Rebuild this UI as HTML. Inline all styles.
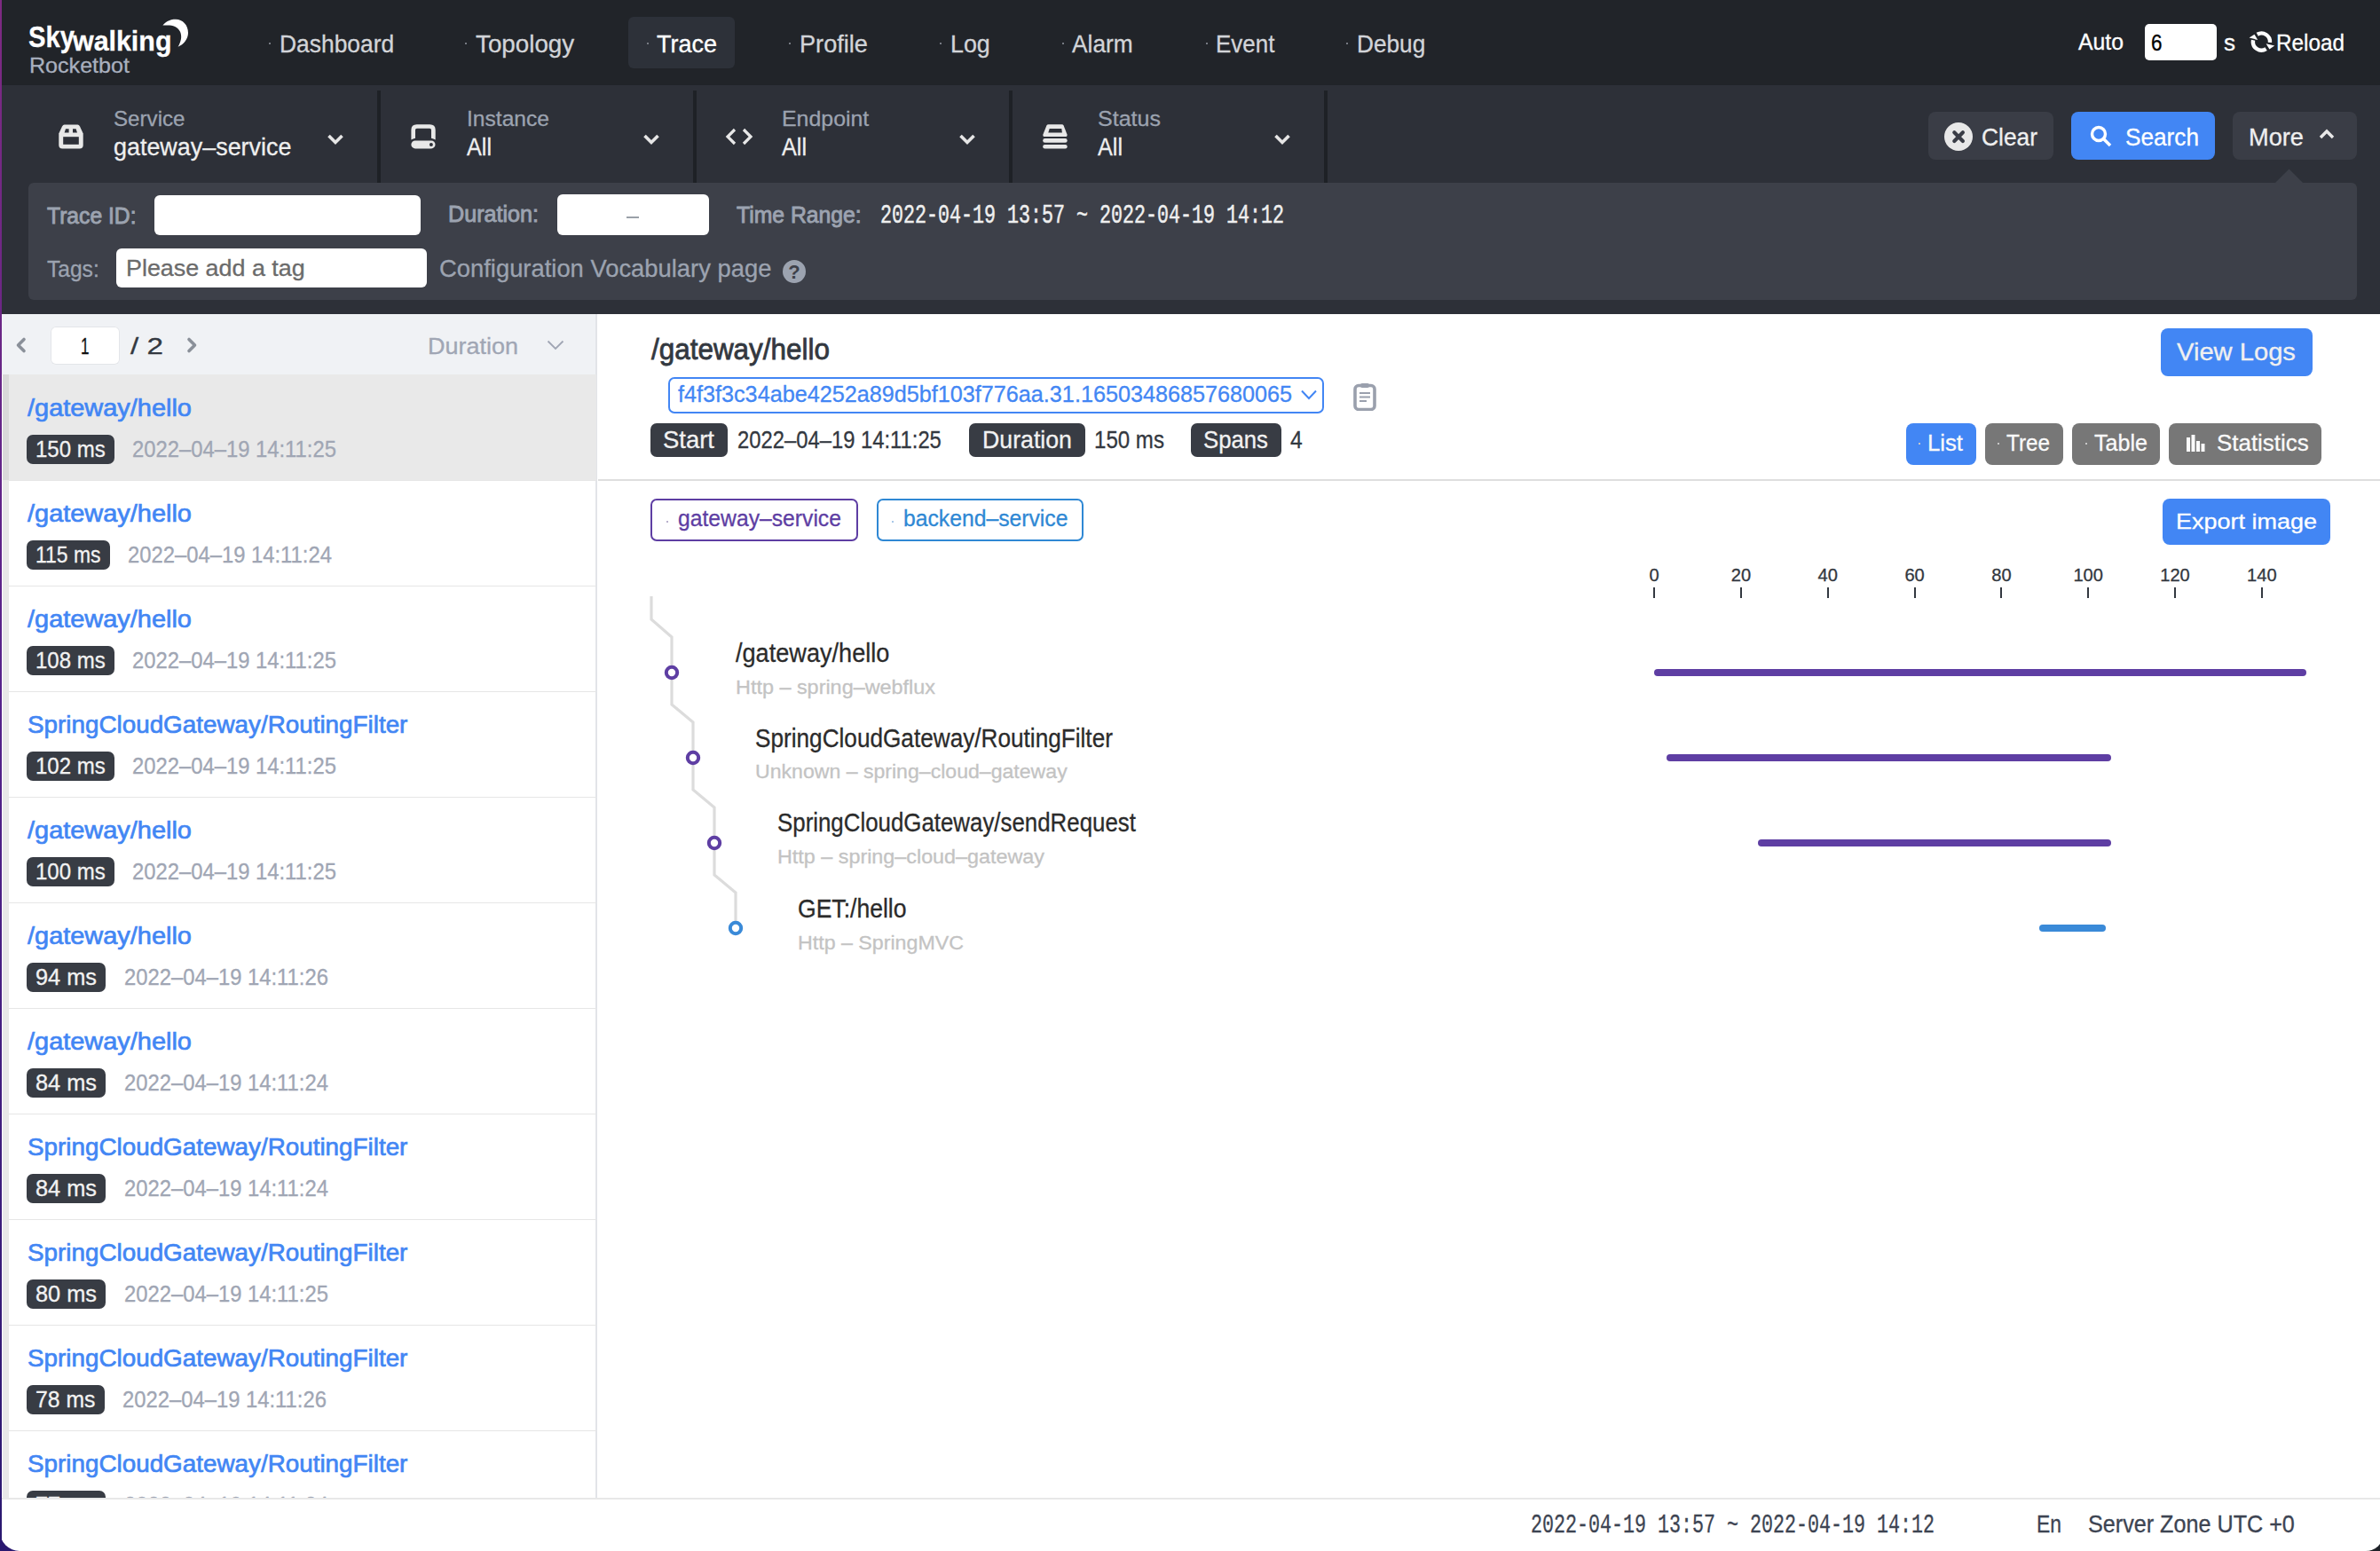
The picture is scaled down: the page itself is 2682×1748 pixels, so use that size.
<!DOCTYPE html>
<html><head><meta charset="utf-8"><style>
html,body{margin:0;padding:0}
body{width:2682px;height:1748px;overflow:hidden;position:relative;background:#1f2228;font-family:'Liberation Sans',sans-serif}
.r{position:absolute}
.t{position:absolute;white-space:nowrap;line-height:normal;transform-origin:0 0}
#win{position:absolute;left:0;top:0;width:2686px;height:1748px;overflow:hidden;border-radius:0 0 20px 22px}
</style></head><body>
<div class="r" style="left:0;top:1700px;width:40px;height:48px;background:#2a1870"></div>
<div id="win">
<div class="r" style="left:0.00px;top:0.00px;width:2682.00px;height:96.00px;background:#212429;"></div>
<div class="t" style="left:32.00px;top:22.31px;font-size:34.08px;color:#fff;font-family:'Liberation Sans',sans-serif;font-weight:700;transform:scaleX(0.8576);-webkit-text-stroke:0.3px #fff;">Sky</div>
<div class="t" style="left:82.00px;top:29.06px;font-size:31.42px;color:#fff;font-family:'Liberation Sans',sans-serif;font-weight:700;transform:scaleX(0.9675);-webkit-text-stroke:0.3px #fff;">walking</div>
<svg class="r" style="left:180px;top:20px" width="36" height="36" viewBox="0 0 36 36"><path d="M3.4 8.4 C8 3 14 1.5 18 1.7 C26 2 32 8 32 17 C32 24 27 30 20.6 32.8 C24 27 25 22 23.5 17 C22 12 17 9 11 8.5 C8 8.3 5 8.5 3.4 8.4 Z" fill="#fff"/></svg>
<div class="t" style="left:33.00px;top:60.39px;font-size:24.44px;color:#a9b0bf;font-family:'Liberation Sans',sans-serif;font-weight:400;transform:scaleX(1.0268);-webkit-text-stroke:0.3px #a9b0bf;">Rocketbot</div>
<div class="r" style="left:708.00px;top:18.75px;width:120.00px;height:58.00px;background:#2d3139;border-radius:6px;"></div>
<div class="t" style="left:314.50px;top:34.04px;font-size:27.37px;color:#d2d4d8;font-family:'Liberation Sans',sans-serif;font-weight:400;transform:scaleX(0.9651);-webkit-text-stroke:0.3px #d2d4d8;">Dashboard</div>
<div class="r" style="left:303.00px;top:48.00px;width:2.00px;height:2.00px;background:#777b83;"></div>
<div class="t" style="left:536.25px;top:34.04px;font-size:27.37px;color:#d2d4d8;font-family:'Liberation Sans',sans-serif;font-weight:400;transform:scaleX(1.0153);-webkit-text-stroke:0.3px #d2d4d8;">Topology</div>
<div class="r" style="left:524.00px;top:48.00px;width:2.00px;height:2.00px;background:#777b83;"></div>
<div class="t" style="left:740.00px;top:34.04px;font-size:27.37px;color:#ffffff;font-family:'Liberation Sans',sans-serif;font-weight:400;transform:scaleX(0.9861);-webkit-text-stroke:0.3px #ffffff;">Trace</div>
<div class="r" style="left:728.75px;top:48.00px;width:2.00px;height:2.00px;background:#777b83;"></div>
<div class="t" style="left:900.90px;top:34.04px;font-size:27.37px;color:#d2d4d8;font-family:'Liberation Sans',sans-serif;font-weight:400;transform:scaleX(0.9924);-webkit-text-stroke:0.3px #d2d4d8;">Profile</div>
<div class="r" style="left:889.00px;top:48.00px;width:2.00px;height:2.00px;background:#777b83;"></div>
<div class="t" style="left:1070.80px;top:34.04px;font-size:27.37px;color:#d2d4d8;font-family:'Liberation Sans',sans-serif;font-weight:400;transform:scaleX(0.9809);-webkit-text-stroke:0.3px #d2d4d8;">Log</div>
<div class="r" style="left:1059.00px;top:48.00px;width:2.00px;height:2.00px;background:#777b83;"></div>
<div class="t" style="left:1207.90px;top:34.04px;font-size:27.37px;color:#d2d4d8;font-family:'Liberation Sans',sans-serif;font-weight:400;transform:scaleX(0.9611);-webkit-text-stroke:0.3px #d2d4d8;">Alarm</div>
<div class="r" style="left:1197.00px;top:48.00px;width:2.00px;height:2.00px;background:#777b83;"></div>
<div class="t" style="left:1369.60px;top:34.04px;font-size:27.37px;color:#d2d4d8;font-family:'Liberation Sans',sans-serif;font-weight:400;transform:scaleX(0.9486);-webkit-text-stroke:0.3px #d2d4d8;">Event</div>
<div class="r" style="left:1359.00px;top:48.00px;width:2.00px;height:2.00px;background:#777b83;"></div>
<div class="t" style="left:1528.90px;top:34.04px;font-size:27.37px;color:#d2d4d8;font-family:'Liberation Sans',sans-serif;font-weight:400;transform:scaleX(0.9583);-webkit-text-stroke:0.3px #d2d4d8;">Debug</div>
<div class="r" style="left:1517.00px;top:48.00px;width:2.00px;height:2.00px;background:#777b83;"></div>
<div class="t" style="left:2342.00px;top:33.20px;font-size:25.84px;color:#fff;font-family:'Liberation Sans',sans-serif;font-weight:400;transform:scaleX(0.9595);-webkit-text-stroke:0.3px #fff;">Auto</div>
<div class="r" style="left:2417.00px;top:27.00px;width:80.50px;height:40.50px;background:#fff;border-radius:5px;"></div>
<div class="t" style="left:2424.00px;top:33.38px;font-size:26.19px;color:#000;font-family:'Liberation Sans',sans-serif;font-weight:400;transform:scaleX(0.8583);-webkit-text-stroke:0.3px #000;">6</div>
<div class="t" style="left:2506.00px;top:33.05px;font-size:26.00px;color:#fff;font-family:'Liberation Sans',sans-serif;font-weight:400;transform:scaleX(1.0000);-webkit-text-stroke:0.3px #fff;">s</div>
<svg class="r" style="left:2530px;top:30px" width="36" height="34" viewBox="0 0 36 34"><path d="M13.75 8.77 A9.5 9.5 0 0 1 27.96 17.83" stroke="#fff" stroke-width="4.4" fill="none"/><path d="M23.6 19.2 L33.2 21.6 L27.4 25.6Z" fill="#fff"/><path d="M9.1 15.3 A9.5 9.5 0 0 0 23.6 25.1" stroke="#fff" stroke-width="4.4" fill="none"/><path d="M4.6 12.6 L10.5 8.8 L14.2 14.9Z" fill="#fff"/></svg>
<div class="t" style="left:2565.00px;top:32.88px;font-size:26.19px;color:#fff;font-family:'Liberation Sans',sans-serif;font-weight:400;transform:scaleX(0.9279);-webkit-text-stroke:0.3px #fff;">Reload</div>
<div class="r" style="left:0.00px;top:96.00px;width:2682.00px;height:258.00px;background:#2d3038;"></div>
<div class="r" style="left:425.00px;top:102.00px;width:4.00px;height:103.50px;background:#1e2126;"></div>
<div class="r" style="left:781.00px;top:102.00px;width:4.00px;height:103.50px;background:#1e2126;"></div>
<div class="r" style="left:1137.00px;top:102.00px;width:4.00px;height:103.50px;background:#1e2126;"></div>
<div class="r" style="left:1492.00px;top:102.00px;width:4.00px;height:103.50px;background:#1e2126;"></div>
<div class="t" style="left:128.25px;top:120.49px;font-size:24.44px;color:#9ca3b0;font-family:'Liberation Sans',sans-serif;font-weight:400;transform:scaleX(0.9877);-webkit-text-stroke:0.3px #9ca3b0;">Service</div>
<div class="t" style="left:128.25px;top:149.77px;font-size:27.93px;color:#efefef;font-family:'Liberation Sans',sans-serif;font-weight:400;transform:scaleX(0.9637);-webkit-text-stroke:0.3px #efefef;">gateway–service</div>
<svg class="r" style="left:368.0px;top:150px" width="20" height="16" viewBox="0 0 20 16"><path d="M2.5 3 L10 10.5 L17.5 3" stroke="#e6e6e6" stroke-width="3.6" fill="none"/></svg>
<div class="t" style="left:525.75px;top:120.49px;font-size:24.44px;color:#9ca3b0;font-family:'Liberation Sans',sans-serif;font-weight:400;transform:scaleX(1.0065);-webkit-text-stroke:0.3px #9ca3b0;">Instance</div>
<div class="t" style="left:525.75px;top:149.77px;font-size:27.93px;color:#efefef;font-family:'Liberation Sans',sans-serif;font-weight:400;transform:scaleX(0.9020);-webkit-text-stroke:0.3px #efefef;">All</div>
<svg class="r" style="left:724.0px;top:150px" width="20" height="16" viewBox="0 0 20 16"><path d="M2.5 3 L10 10.5 L17.5 3" stroke="#e6e6e6" stroke-width="3.6" fill="none"/></svg>
<div class="t" style="left:881.40px;top:120.49px;font-size:24.44px;color:#9ca3b0;font-family:'Liberation Sans',sans-serif;font-weight:400;transform:scaleX(1.0188);-webkit-text-stroke:0.3px #9ca3b0;">Endpoint</div>
<div class="t" style="left:881.40px;top:149.77px;font-size:27.93px;color:#efefef;font-family:'Liberation Sans',sans-serif;font-weight:400;transform:scaleX(0.9020);-webkit-text-stroke:0.3px #efefef;">All</div>
<svg class="r" style="left:1079.5px;top:150px" width="20" height="16" viewBox="0 0 20 16"><path d="M2.5 3 L10 10.5 L17.5 3" stroke="#e6e6e6" stroke-width="3.6" fill="none"/></svg>
<div class="t" style="left:1236.80px;top:120.49px;font-size:24.44px;color:#9ca3b0;font-family:'Liberation Sans',sans-serif;font-weight:400;transform:scaleX(1.0247);-webkit-text-stroke:0.3px #9ca3b0;">Status</div>
<div class="t" style="left:1236.80px;top:149.77px;font-size:27.93px;color:#efefef;font-family:'Liberation Sans',sans-serif;font-weight:400;transform:scaleX(0.9020);-webkit-text-stroke:0.3px #efefef;">All</div>
<svg class="r" style="left:1435.0px;top:150px" width="20" height="16" viewBox="0 0 20 16"><path d="M2.5 3 L10 10.5 L17.5 3" stroke="#e6e6e6" stroke-width="3.6" fill="none"/></svg>
<svg class="r" style="left:66px;top:140px" width="28" height="28" viewBox="0 0 28 28"><path d="M6.5 0.5 H21.5 Q23 0.5 24 2.5 L27.7 10.5 V23.5 Q27.7 27.5 23.7 27.5 H4.3 Q0.3 27.5 0.3 23.5 V10.5 L4 2.5 Q5 0.5 6.5 0.5Z" fill="#e8e8e8"/><rect x="5.2" y="14.2" width="17.6" height="8.6" fill="#2d3038"/><path d="M8 5.2 H11.6 V9.4 H6.6Z M16 5.2 H19.6 L21 9.4 H16Z" fill="#2d3038"/></svg>
<svg class="r" style="left:463px;top:140px" width="28" height="28" viewBox="0 0 28 28"><path d="M0.4 17.6 V6.5 Q0.4 0.2 6.7 0.2 H21.4 Q27.7 0.2 27.7 6.5 V17.6 Q25.5 16.3 23 15.8 V6.5 Q23 4.8 21.3 4.8 H6.8 Q5 4.8 5 6.5 V15.8 Q2.5 16.3 0.4 17.6Z" fill="#e8e8e8"/><rect x="0.4" y="18.4" width="27.1" height="9" rx="4.5" fill="#e8e8e8"/><circle cx="22.9" cy="22.9" r="2" fill="#2d3038"/></svg>
<svg class="r" style="left:817px;top:144px" width="32" height="20" viewBox="0 0 32 20"><path d="M11 2 L3 10 L11 18 M21 2 L29 10 L21 18" stroke="#e8e8e8" stroke-width="3.2" fill="none"/></svg>
<svg class="r" style="left:1174px;top:140px" width="30" height="30" viewBox="0 0 30 30"><path d="M7.5 0.2 H22.7 Q24 0.2 24.6 1.6 L28.5 11.5 Q29 14.1 26.5 14.1 H3.4 Q0.9 14.1 1.4 11.5 L5.4 1.6 Q6 0.2 7.5 0.2Z" fill="#e8e8e8"/><path d="M8.7 5.1 H22.3 L22.9 9.4 H7.3Z" fill="#2d3038"/><rect x="1.2" y="16.1" width="27.5" height="4.7" rx="2.3" fill="#e8e8e8"/><rect x="1.2" y="22.9" width="27.5" height="4.5" rx="2.2" fill="#e8e8e8"/></svg>
<div class="r" style="left:2173.00px;top:126.00px;width:141.00px;height:54.00px;background:#3a3d46;border-radius:8px;"></div>
<svg class="r" style="left:2191px;top:138px" width="32" height="32" viewBox="0 0 32 32"><circle cx="16" cy="16" r="16" fill="#e8e8e8"/><path d="M11.3 11.3 L20.9 20.9 M20.9 11.3 L11.3 20.9" stroke="#3a3d46" stroke-width="4.2" stroke-linecap="round"/></svg>
<div class="t" style="left:2233.00px;top:139.74px;font-size:26.89px;color:#efefef;font-family:'Liberation Sans',sans-serif;font-weight:400;transform:scaleX(0.9806);-webkit-text-stroke:0.3px #efefef;">Clear</div>
<div class="r" style="left:2334.00px;top:126.00px;width:162.00px;height:54.00px;background:#4286f4;border-radius:8px;"></div>
<svg class="r" style="left:2354px;top:140px" width="28" height="28" viewBox="0 0 28 28"><circle cx="11" cy="11" r="7.5" stroke="#fff" stroke-width="3.4" fill="none"/><path d="M16.5 16.5 L24 24" stroke="#fff" stroke-width="3.6"/></svg>
<div class="t" style="left:2395.00px;top:140.24px;font-size:26.89px;color:#fff;font-family:'Liberation Sans',sans-serif;font-weight:400;transform:scaleX(0.9743);-webkit-text-stroke:0.3px #fff;">Search</div>
<div class="r" style="left:2516.00px;top:126.00px;width:140.00px;height:54.00px;background:#3a3d46;border-radius:8px;"></div>
<div class="t" style="left:2534.00px;top:140.24px;font-size:26.89px;color:#efefef;font-family:'Liberation Sans',sans-serif;font-weight:400;transform:scaleX(1.0122);-webkit-text-stroke:0.3px #efefef;">More</div>
<svg class="r" style="left:2612px;top:144px" width="20" height="14" viewBox="0 0 20 14"><path d="M3 11 L10 4 L17 11" stroke="#e8e8e8" stroke-width="3.4" fill="none"/></svg>
<div class="r" style="left:32.00px;top:206.00px;width:2624.00px;height:132.00px;background:#3d4049;border-radius:6px;"></div>
<svg class="r" style="left:2563px;top:190px" width="33" height="17" viewBox="0 0 33 17"><path d="M0 17 L16.5 0.5 L33 17Z" fill="#3d4049"/></svg>
<div class="t" style="left:52.50px;top:228.52px;font-size:25.49px;color:#9ca3b0;font-family:'Liberation Sans',sans-serif;font-weight:400;transform:scaleX(0.9677);-webkit-text-stroke:0.9px #9ca3b0;">Trace ID:</div>
<div class="r" style="left:174.25px;top:220.00px;width:299.50px;height:44.50px;background:#fff;border-radius:6px;"></div>
<div class="t" style="left:504.70px;top:227.02px;font-size:25.49px;color:#9ca3b0;font-family:'Liberation Sans',sans-serif;font-weight:400;transform:scaleX(0.9862);-webkit-text-stroke:0.9px #9ca3b0;">Duration:</div>
<div class="r" style="left:627.80px;top:219.00px;width:171.00px;height:46.00px;background:#fff;border-radius:6px;"></div>
<div class="r" style="left:706.00px;top:244.00px;width:14.00px;height:2.00px;background:#9aa0a8;"></div>
<div class="t" style="left:830.30px;top:227.52px;font-size:25.49px;color:#9ca3b0;font-family:'Liberation Sans',sans-serif;font-weight:400;transform:scaleX(0.9706);-webkit-text-stroke:0.9px #9ca3b0;">Time Range:</div>
<div class="t" style="left:992.00px;top:227.24px;font-size:28.91px;color:#efefef;font-family:'Liberation Mono',monospace;font-weight:400;transform:scaleX(0.7495);-webkit-text-stroke:0.5px #efefef;">2022-04-19 13:57 ~ 2022-04-19 14:12</div>
<div class="t" style="left:52.50px;top:288.52px;font-size:25.49px;color:#9ca3b0;font-family:'Liberation Sans',sans-serif;font-weight:400;transform:scaleX(0.9643);-webkit-text-stroke:0.3px #9ca3b0;">Tags:</div>
<div class="r" style="left:131.25px;top:280.00px;width:349.50px;height:44.25px;background:#fff;border-radius:6px;"></div>
<div class="t" style="left:142.00px;top:288.20px;font-size:25.84px;color:#6b6b6b;font-family:'Liberation Sans',sans-serif;font-weight:400;transform:scaleX(1.0403);-webkit-text-stroke:0.3px #6b6b6b;">Please add a tag</div>
<div class="t" style="left:495.00px;top:287.77px;font-size:26.96px;color:#9ca3b0;font-family:'Liberation Sans',sans-serif;font-weight:400;transform:scaleX(1.0156);-webkit-text-stroke:0.3px #9ca3b0;">Configuration Vocabulary page</div>
<svg class="r" style="left:882px;top:292.5px" width="26" height="26" viewBox="0 0 26 26"><circle cx="13" cy="13" r="13" fill="#9ca3b0"/><text x="13" y="21" text-anchor="middle" font-family="Liberation Sans" font-weight="700" font-size="22" fill="#3d4049">?</text></svg>
<div class="r" style="left:2.00px;top:354.00px;width:2680.00px;height:1394.00px;background:#fff;"></div>
<div class="r" style="left:2.00px;top:354.00px;width:670.00px;height:68.00px;background:#f0f2f5;"></div>
<div class="r" style="left:671.00px;top:354.00px;width:2.00px;height:1334.00px;background:#e2e4e8;"></div>
<svg class="r" style="left:15px;top:378px" width="18" height="22" viewBox="0 0 18 22"><path d="M12 4.5 L5.5 11 L12 17.5" stroke="#8a9099" stroke-width="3.6" stroke-linecap="round" stroke-linejoin="round" fill="none"/></svg>
<div class="r" style="left:57.00px;top:368.00px;width:78.00px;height:42.60px;background:#fff;border-radius:6px;box-shadow:0 0 0 1px #e3e5e9 inset;"></div>
<div class="t" style="left:90.50px;top:374.56px;font-size:26.54px;color:#111;font-family:'Liberation Sans',sans-serif;font-weight:400;transform:scaleX(0.6437);-webkit-text-stroke:0.3px #111;">1</div>
<div class="t" style="left:147.00px;top:374.56px;font-size:26.54px;color:#333840;font-family:'Liberation Sans',sans-serif;font-weight:400;transform:scaleX(1.2541);-webkit-text-stroke:0.3px #333840;">/ 2</div>
<svg class="r" style="left:207px;top:378px" width="18" height="22" viewBox="0 0 18 22"><path d="M6 4.5 L12.5 11 L6 17.5" stroke="#8a9099" stroke-width="3.6" stroke-linecap="round" stroke-linejoin="round" fill="none"/></svg>
<div class="t" style="left:482.00px;top:374.56px;font-size:26.54px;color:#a0a6b4;font-family:'Liberation Sans',sans-serif;font-weight:400;transform:scaleX(1.0169);-webkit-text-stroke:0.3px #a0a6b4;">Duration</div>
<svg class="r" style="left:615px;top:382px" width="22" height="14" viewBox="0 0 22 14"><path d="M2.5 2.5 L11 11 L19.5 2.5" stroke="#a0a6b4" stroke-width="1.8" fill="none"/></svg>
<div class="r" style="left:0;top:422px;width:672px;height:1266px;overflow:hidden">
<div class="r" style="left:3.00px;top:0.00px;width:7.00px;height:119.50px;background:#d9d9d9;"></div>
<div class="r" style="left:10.00px;top:0.00px;width:662.00px;height:119.50px;background:#e9e9e9;"></div>
<div class="r" style="left:10.00px;top:118.50px;width:662.00px;height:1.50px;background:#e6e6e6;"></div>
<div class="t" style="left:31.00px;top:21.16px;font-size:28.49px;color:#4286f4;font-family:'Liberation Sans',sans-serif;font-weight:400;transform:scaleX(1.0156);-webkit-text-stroke:0.7px #4286f4;">/gateway/hello</div>
<div class="r" style="left:30.00px;top:68.00px;width:98.80px;height:33.00px;background:#383c44;border-radius:7px;"></div>
<div class="t" style="left:39.70px;top:70.19px;font-size:25.42px;color:#f2f2f2;font-family:'Liberation Sans',sans-serif;font-weight:400;transform:scaleX(0.9453);-webkit-text-stroke:0.3px #f2f2f2;">150 ms</div>
<div class="t" style="left:149.30px;top:70.19px;font-size:25.42px;color:#a0a6b4;font-family:'Liberation Sans',sans-serif;font-weight:400;transform:scaleX(0.9369);-webkit-text-stroke:0.3px #a0a6b4;">2022–04–19 14:11:25</div>
<div class="r" style="left:3.00px;top:119.00px;width:7.00px;height:119.50px;background:#e8e8e8;"></div>
<div class="r" style="left:10.00px;top:237.50px;width:662.00px;height:1.50px;background:#e6e6e6;"></div>
<div class="t" style="left:31.00px;top:140.16px;font-size:28.49px;color:#4286f4;font-family:'Liberation Sans',sans-serif;font-weight:400;transform:scaleX(1.0156);-webkit-text-stroke:0.7px #4286f4;">/gateway/hello</div>
<div class="r" style="left:30.00px;top:187.00px;width:93.50px;height:33.00px;background:#383c44;border-radius:7px;"></div>
<div class="t" style="left:39.70px;top:189.19px;font-size:25.42px;color:#f2f2f2;font-family:'Liberation Sans',sans-serif;font-weight:400;transform:scaleX(0.9022);-webkit-text-stroke:0.3px #f2f2f2;">115 ms</div>
<div class="t" style="left:144.00px;top:189.19px;font-size:25.42px;color:#a0a6b4;font-family:'Liberation Sans',sans-serif;font-weight:400;transform:scaleX(0.9369);-webkit-text-stroke:0.3px #a0a6b4;">2022–04–19 14:11:24</div>
<div class="r" style="left:3.00px;top:238.00px;width:7.00px;height:119.50px;background:#e8e8e8;"></div>
<div class="r" style="left:10.00px;top:356.50px;width:662.00px;height:1.50px;background:#e6e6e6;"></div>
<div class="t" style="left:31.00px;top:259.16px;font-size:28.49px;color:#4286f4;font-family:'Liberation Sans',sans-serif;font-weight:400;transform:scaleX(1.0156);-webkit-text-stroke:0.7px #4286f4;">/gateway/hello</div>
<div class="r" style="left:30.00px;top:306.00px;width:98.80px;height:33.00px;background:#383c44;border-radius:7px;"></div>
<div class="t" style="left:39.70px;top:308.19px;font-size:25.42px;color:#f2f2f2;font-family:'Liberation Sans',sans-serif;font-weight:400;transform:scaleX(0.9453);-webkit-text-stroke:0.3px #f2f2f2;">108 ms</div>
<div class="t" style="left:149.30px;top:308.19px;font-size:25.42px;color:#a0a6b4;font-family:'Liberation Sans',sans-serif;font-weight:400;transform:scaleX(0.9369);-webkit-text-stroke:0.3px #a0a6b4;">2022–04–19 14:11:25</div>
<div class="r" style="left:3.00px;top:357.00px;width:7.00px;height:119.50px;background:#e8e8e8;"></div>
<div class="r" style="left:10.00px;top:475.50px;width:662.00px;height:1.50px;background:#e6e6e6;"></div>
<div class="t" style="left:31.00px;top:378.16px;font-size:28.49px;color:#4286f4;font-family:'Liberation Sans',sans-serif;font-weight:400;transform:scaleX(0.9768);-webkit-text-stroke:0.7px #4286f4;">SpringCloudGateway/RoutingFilter</div>
<div class="r" style="left:30.00px;top:425.00px;width:98.80px;height:33.00px;background:#383c44;border-radius:7px;"></div>
<div class="t" style="left:39.70px;top:427.19px;font-size:25.42px;color:#f2f2f2;font-family:'Liberation Sans',sans-serif;font-weight:400;transform:scaleX(0.9453);-webkit-text-stroke:0.3px #f2f2f2;">102 ms</div>
<div class="t" style="left:149.30px;top:427.19px;font-size:25.42px;color:#a0a6b4;font-family:'Liberation Sans',sans-serif;font-weight:400;transform:scaleX(0.9369);-webkit-text-stroke:0.3px #a0a6b4;">2022–04–19 14:11:25</div>
<div class="r" style="left:3.00px;top:476.00px;width:7.00px;height:119.50px;background:#e8e8e8;"></div>
<div class="r" style="left:10.00px;top:594.50px;width:662.00px;height:1.50px;background:#e6e6e6;"></div>
<div class="t" style="left:31.00px;top:497.16px;font-size:28.49px;color:#4286f4;font-family:'Liberation Sans',sans-serif;font-weight:400;transform:scaleX(1.0156);-webkit-text-stroke:0.7px #4286f4;">/gateway/hello</div>
<div class="r" style="left:30.00px;top:544.00px;width:98.80px;height:33.00px;background:#383c44;border-radius:7px;"></div>
<div class="t" style="left:39.70px;top:546.19px;font-size:25.42px;color:#f2f2f2;font-family:'Liberation Sans',sans-serif;font-weight:400;transform:scaleX(0.9453);-webkit-text-stroke:0.3px #f2f2f2;">100 ms</div>
<div class="t" style="left:149.30px;top:546.19px;font-size:25.42px;color:#a0a6b4;font-family:'Liberation Sans',sans-serif;font-weight:400;transform:scaleX(0.9369);-webkit-text-stroke:0.3px #a0a6b4;">2022–04–19 14:11:25</div>
<div class="r" style="left:3.00px;top:595.00px;width:7.00px;height:119.50px;background:#e8e8e8;"></div>
<div class="r" style="left:10.00px;top:713.50px;width:662.00px;height:1.50px;background:#e6e6e6;"></div>
<div class="t" style="left:31.00px;top:616.16px;font-size:28.49px;color:#4286f4;font-family:'Liberation Sans',sans-serif;font-weight:400;transform:scaleX(1.0156);-webkit-text-stroke:0.7px #4286f4;">/gateway/hello</div>
<div class="r" style="left:30.00px;top:663.00px;width:89.00px;height:33.00px;background:#383c44;border-radius:7px;"></div>
<div class="t" style="left:39.70px;top:665.19px;font-size:25.42px;color:#f2f2f2;font-family:'Liberation Sans',sans-serif;font-weight:400;transform:scaleX(0.9968);-webkit-text-stroke:0.3px #f2f2f2;">94 ms</div>
<div class="t" style="left:139.50px;top:665.19px;font-size:25.42px;color:#a0a6b4;font-family:'Liberation Sans',sans-serif;font-weight:400;transform:scaleX(0.9369);-webkit-text-stroke:0.3px #a0a6b4;">2022–04–19 14:11:26</div>
<div class="r" style="left:3.00px;top:714.00px;width:7.00px;height:119.50px;background:#e8e8e8;"></div>
<div class="r" style="left:10.00px;top:832.50px;width:662.00px;height:1.50px;background:#e6e6e6;"></div>
<div class="t" style="left:31.00px;top:735.16px;font-size:28.49px;color:#4286f4;font-family:'Liberation Sans',sans-serif;font-weight:400;transform:scaleX(1.0156);-webkit-text-stroke:0.7px #4286f4;">/gateway/hello</div>
<div class="r" style="left:30.00px;top:782.00px;width:89.00px;height:33.00px;background:#383c44;border-radius:7px;"></div>
<div class="t" style="left:39.70px;top:784.19px;font-size:25.42px;color:#f2f2f2;font-family:'Liberation Sans',sans-serif;font-weight:400;transform:scaleX(0.9968);-webkit-text-stroke:0.3px #f2f2f2;">84 ms</div>
<div class="t" style="left:139.50px;top:784.19px;font-size:25.42px;color:#a0a6b4;font-family:'Liberation Sans',sans-serif;font-weight:400;transform:scaleX(0.9369);-webkit-text-stroke:0.3px #a0a6b4;">2022–04–19 14:11:24</div>
<div class="r" style="left:3.00px;top:833.00px;width:7.00px;height:119.50px;background:#e8e8e8;"></div>
<div class="r" style="left:10.00px;top:951.50px;width:662.00px;height:1.50px;background:#e6e6e6;"></div>
<div class="t" style="left:31.00px;top:854.16px;font-size:28.49px;color:#4286f4;font-family:'Liberation Sans',sans-serif;font-weight:400;transform:scaleX(0.9768);-webkit-text-stroke:0.7px #4286f4;">SpringCloudGateway/RoutingFilter</div>
<div class="r" style="left:30.00px;top:901.00px;width:89.00px;height:33.00px;background:#383c44;border-radius:7px;"></div>
<div class="t" style="left:39.70px;top:903.19px;font-size:25.42px;color:#f2f2f2;font-family:'Liberation Sans',sans-serif;font-weight:400;transform:scaleX(0.9968);-webkit-text-stroke:0.3px #f2f2f2;">84 ms</div>
<div class="t" style="left:139.50px;top:903.19px;font-size:25.42px;color:#a0a6b4;font-family:'Liberation Sans',sans-serif;font-weight:400;transform:scaleX(0.9369);-webkit-text-stroke:0.3px #a0a6b4;">2022–04–19 14:11:24</div>
<div class="r" style="left:3.00px;top:952.00px;width:7.00px;height:119.50px;background:#e8e8e8;"></div>
<div class="r" style="left:10.00px;top:1070.50px;width:662.00px;height:1.50px;background:#e6e6e6;"></div>
<div class="t" style="left:31.00px;top:973.16px;font-size:28.49px;color:#4286f4;font-family:'Liberation Sans',sans-serif;font-weight:400;transform:scaleX(0.9768);-webkit-text-stroke:0.7px #4286f4;">SpringCloudGateway/RoutingFilter</div>
<div class="r" style="left:30.00px;top:1020.00px;width:89.00px;height:33.00px;background:#383c44;border-radius:7px;"></div>
<div class="t" style="left:39.70px;top:1022.19px;font-size:25.42px;color:#f2f2f2;font-family:'Liberation Sans',sans-serif;font-weight:400;transform:scaleX(0.9968);-webkit-text-stroke:0.3px #f2f2f2;">80 ms</div>
<div class="t" style="left:139.50px;top:1022.19px;font-size:25.42px;color:#a0a6b4;font-family:'Liberation Sans',sans-serif;font-weight:400;transform:scaleX(0.9369);-webkit-text-stroke:0.3px #a0a6b4;">2022–04–19 14:11:25</div>
<div class="r" style="left:3.00px;top:1071.00px;width:7.00px;height:119.50px;background:#e8e8e8;"></div>
<div class="r" style="left:10.00px;top:1189.50px;width:662.00px;height:1.50px;background:#e6e6e6;"></div>
<div class="t" style="left:31.00px;top:1092.16px;font-size:28.49px;color:#4286f4;font-family:'Liberation Sans',sans-serif;font-weight:400;transform:scaleX(0.9768);-webkit-text-stroke:0.7px #4286f4;">SpringCloudGateway/RoutingFilter</div>
<div class="r" style="left:30.00px;top:1139.00px;width:87.60px;height:33.00px;background:#383c44;border-radius:7px;"></div>
<div class="t" style="left:39.70px;top:1141.19px;font-size:25.42px;color:#f2f2f2;font-family:'Liberation Sans',sans-serif;font-weight:400;transform:scaleX(0.9737);-webkit-text-stroke:0.3px #f2f2f2;">78 ms</div>
<div class="t" style="left:138.10px;top:1141.19px;font-size:25.42px;color:#a0a6b4;font-family:'Liberation Sans',sans-serif;font-weight:400;transform:scaleX(0.9369);-webkit-text-stroke:0.3px #a0a6b4;">2022–04–19 14:11:26</div>
<div class="r" style="left:3.00px;top:1190.00px;width:7.00px;height:119.50px;background:#e8e8e8;"></div>
<div class="r" style="left:10.00px;top:1308.50px;width:662.00px;height:1.50px;background:#e6e6e6;"></div>
<div class="t" style="left:31.00px;top:1211.16px;font-size:28.49px;color:#4286f4;font-family:'Liberation Sans',sans-serif;font-weight:400;transform:scaleX(0.9768);-webkit-text-stroke:0.7px #4286f4;">SpringCloudGateway/RoutingFilter</div>
<div class="r" style="left:30.00px;top:1258.00px;width:89.00px;height:33.00px;background:#383c44;border-radius:7px;"></div>
<div class="t" style="left:39.70px;top:1260.19px;font-size:25.42px;color:#f2f2f2;font-family:'Liberation Sans',sans-serif;font-weight:400;transform:scaleX(0.9968);-webkit-text-stroke:0.3px #f2f2f2;">77 ms</div>
<div class="t" style="left:139.50px;top:1260.19px;font-size:25.42px;color:#a0a6b4;font-family:'Liberation Sans',sans-serif;font-weight:400;transform:scaleX(0.9369);-webkit-text-stroke:0.3px #a0a6b4;">2022–04–19 14:11:24</div>
</div>
<div class="t" style="left:733.75px;top:374.77px;font-size:32.82px;color:#333840;font-family:'Liberation Sans',sans-serif;font-weight:400;transform:scaleX(0.9579);-webkit-text-stroke:0.8px #333840;">/gateway/hello</div>
<div class="r" style="left:753.00px;top:425.00px;width:739.00px;height:40.50px;background:#fff;border:2px solid #4286f4;border-radius:7px;box-sizing:border-box;"></div>
<div class="t" style="left:764.00px;top:430.46px;font-size:25.56px;color:#4286f4;font-family:'Liberation Sans',sans-serif;font-weight:400;transform:scaleX(0.9861);-webkit-text-stroke:0.3px #4286f4;">f4f3f3c34abe4252a89d5bf103f776aa.31.16503486857680065</div>
<svg class="r" style="left:1465px;top:438px" width="20" height="14" viewBox="0 0 20 14"><path d="M2 2.5 L10 11 L18 2.5" stroke="#4286f4" stroke-width="2" fill="none"/></svg>
<svg class="r" style="left:1525px;top:431px" width="26" height="32" viewBox="0 0 26 32"><rect x="2" y="3.5" width="22" height="27" rx="4" stroke="#9aa0ad" stroke-width="3.6" fill="none"/><rect x="8" y="1" width="10" height="5" rx="2" fill="#9aa0ad"/><path d="M7 12 H19 M7 16.5 H19 M7 21 H15" stroke="#9aa0ad" stroke-width="2"/></svg>
<div class="r" style="left:733.00px;top:476.50px;width:86.50px;height:38.00px;background:#383c44;border-radius:7px;"></div>
<div class="t" style="left:747.00px;top:480.17px;font-size:27.23px;color:#f2f2f2;font-family:'Liberation Sans',sans-serif;font-weight:400;transform:scaleX(1.0084);-webkit-text-stroke:0.3px #f2f2f2;">Start</div>
<div class="t" style="left:831.00px;top:480.17px;font-size:27.23px;color:#333840;font-family:'Liberation Sans',sans-serif;font-weight:400;transform:scaleX(0.8744);-webkit-text-stroke:0.3px #333840;">2022–04–19 14:11:25</div>
<div class="r" style="left:1092.00px;top:476.50px;width:130.50px;height:38.00px;background:#383c44;border-radius:7px;"></div>
<div class="t" style="left:1107.00px;top:480.17px;font-size:27.23px;color:#f2f2f2;font-family:'Liberation Sans',sans-serif;font-weight:400;transform:scaleX(0.9811);-webkit-text-stroke:0.3px #f2f2f2;">Duration</div>
<div class="t" style="left:1232.50px;top:480.17px;font-size:27.23px;color:#333840;font-family:'Liberation Sans',sans-serif;font-weight:400;transform:scaleX(0.8846);-webkit-text-stroke:0.3px #333840;">150 ms</div>
<div class="r" style="left:1342.00px;top:476.50px;width:102.00px;height:38.00px;background:#383c44;border-radius:7px;"></div>
<div class="t" style="left:1356.00px;top:480.17px;font-size:27.23px;color:#f2f2f2;font-family:'Liberation Sans',sans-serif;font-weight:400;transform:scaleX(0.9453);-webkit-text-stroke:0.3px #f2f2f2;">Spans</div>
<div class="t" style="left:1454.00px;top:480.17px;font-size:27.23px;color:#333840;font-family:'Liberation Sans',sans-serif;font-weight:400;transform:scaleX(0.9045);-webkit-text-stroke:0.3px #333840;">4</div>
<div class="r" style="left:2435.00px;top:370.00px;width:171.00px;height:53.50px;background:#4286f4;border-radius:8px;"></div>
<div class="t" style="left:2453.00px;top:382.24px;font-size:26.89px;color:#f0f0f0;font-family:'Liberation Sans',sans-serif;font-weight:400;transform:scaleX(1.0845);-webkit-text-stroke:0.3px #f0f0f0;">View Logs</div>
<div class="r" style="left:2148.00px;top:476.50px;width:78.50px;height:47.00px;background:#4286f4;border-radius:8px;"></div>
<div class="t" style="left:2172.00px;top:484.70px;font-size:25.84px;color:#fafafa;font-family:'Liberation Sans',sans-serif;font-weight:400;transform:scaleX(0.9948);-webkit-text-stroke:0.3px #fafafa;">List</div>
<div class="r" style="left:2162.00px;top:499.00px;width:2.00px;height:2.00px;background:#c8c8c8;"></div>
<div class="r" style="left:2237.00px;top:476.50px;width:87.50px;height:47.00px;background:#777777;border-radius:8px;"></div>
<div class="t" style="left:2261.25px;top:484.70px;font-size:25.84px;color:#fafafa;font-family:'Liberation Sans',sans-serif;font-weight:400;transform:scaleX(0.9393);-webkit-text-stroke:0.3px #fafafa;">Tree</div>
<div class="r" style="left:2251.25px;top:499.00px;width:2.00px;height:2.00px;background:#c8c8c8;"></div>
<div class="r" style="left:2335.00px;top:476.50px;width:99.00px;height:47.00px;background:#777777;border-radius:8px;"></div>
<div class="t" style="left:2359.50px;top:484.70px;font-size:25.84px;color:#fafafa;font-family:'Liberation Sans',sans-serif;font-weight:400;transform:scaleX(0.9714);-webkit-text-stroke:0.3px #fafafa;">Table</div>
<div class="r" style="left:2349.50px;top:499.00px;width:2.00px;height:2.00px;background:#c8c8c8;"></div>
<div class="r" style="left:2444.00px;top:476.50px;width:171.75px;height:47.00px;background:#777777;border-radius:8px;"></div>
<div class="t" style="left:2498.25px;top:484.70px;font-size:25.84px;color:#fafafa;font-family:'Liberation Sans',sans-serif;font-weight:400;transform:scaleX(1.0036);-webkit-text-stroke:0.3px #fafafa;">Statistics</div>
<svg class="r" style="left:2464px;top:490px" width="21" height="19" viewBox="0 0 21 19"><rect x="0" y="3" width="4" height="16" fill="#fafafa"/><rect x="5.5" y="0" width="4" height="19" fill="#fafafa"/><rect x="11" y="7" width="4" height="12" fill="#fafafa"/><rect x="16.5" y="10" width="4" height="9" fill="#fafafa"/></svg>
<div class="r" style="left:674.00px;top:539.50px;width:2008.00px;height:2.00px;background:#dedede;"></div>
<div class="r" style="left:733.00px;top:562.00px;width:233.50px;height:47.50px;background:#fff;border:2px solid #5e3ea3;border-radius:7px;box-sizing:border-box;"></div>
<div class="r" style="left:751.00px;top:587.00px;width:2.00px;height:2.00px;background:#b8b0cc;"></div>
<div class="t" style="left:764.00px;top:569.06px;font-size:26.54px;color:#5e3ea3;font-family:'Liberation Sans',sans-serif;font-weight:400;transform:scaleX(0.9309);-webkit-text-stroke:0.3px #5e3ea3;">gateway–service</div>
<div class="r" style="left:987.50px;top:562.00px;width:233.50px;height:47.50px;background:#fff;border:2px solid #2f88d4;border-radius:7px;box-sizing:border-box;"></div>
<div class="r" style="left:1005.00px;top:587.00px;width:2.00px;height:2.00px;background:#a8c8e8;"></div>
<div class="t" style="left:1017.50px;top:569.06px;font-size:26.54px;color:#2f88d4;font-family:'Liberation Sans',sans-serif;font-weight:400;transform:scaleX(0.9315);-webkit-text-stroke:0.3px #2f88d4;">backend–service</div>
<div class="r" style="left:2437.00px;top:562.00px;width:189.00px;height:52.00px;background:#4286f4;border-radius:8px;"></div>
<div class="t" style="left:2452.00px;top:573.99px;font-size:24.44px;color:#fff;font-family:'Liberation Sans',sans-serif;font-weight:400;transform:scaleX(1.1042);-webkit-text-stroke:0.3px #fff;">Export image</div>
<div class="t" style="left:1858.61px;top:637.48px;font-size:20.11px;color:#333840;font-family:'Liberation Sans',sans-serif;font-weight:400;-webkit-text-stroke:0.3px #333840;">0</div>
<div class="r" style="left:1863.20px;top:662.00px;width:2.00px;height:12.00px;background:#333840;"></div>
<div class="t" style="left:1950.81px;top:637.48px;font-size:20.11px;color:#333840;font-family:'Liberation Sans',sans-serif;font-weight:400;-webkit-text-stroke:0.3px #333840;">20</div>
<div class="r" style="left:1961.00px;top:662.00px;width:2.00px;height:12.00px;background:#333840;"></div>
<div class="t" style="left:2048.61px;top:637.48px;font-size:20.11px;color:#333840;font-family:'Liberation Sans',sans-serif;font-weight:400;-webkit-text-stroke:0.3px #333840;">40</div>
<div class="r" style="left:2058.80px;top:662.00px;width:2.00px;height:12.00px;background:#333840;"></div>
<div class="t" style="left:2146.41px;top:637.48px;font-size:20.11px;color:#333840;font-family:'Liberation Sans',sans-serif;font-weight:400;-webkit-text-stroke:0.3px #333840;">60</div>
<div class="r" style="left:2156.60px;top:662.00px;width:2.00px;height:12.00px;background:#333840;"></div>
<div class="t" style="left:2244.21px;top:637.48px;font-size:20.11px;color:#333840;font-family:'Liberation Sans',sans-serif;font-weight:400;-webkit-text-stroke:0.3px #333840;">80</div>
<div class="r" style="left:2254.40px;top:662.00px;width:2.00px;height:12.00px;background:#333840;"></div>
<div class="t" style="left:2336.42px;top:637.48px;font-size:20.11px;color:#333840;font-family:'Liberation Sans',sans-serif;font-weight:400;-webkit-text-stroke:0.3px #333840;">100</div>
<div class="r" style="left:2352.20px;top:662.00px;width:2.00px;height:12.00px;background:#333840;"></div>
<div class="t" style="left:2434.22px;top:637.48px;font-size:20.11px;color:#333840;font-family:'Liberation Sans',sans-serif;font-weight:400;-webkit-text-stroke:0.3px #333840;">120</div>
<div class="r" style="left:2450.00px;top:662.00px;width:2.00px;height:12.00px;background:#333840;"></div>
<div class="t" style="left:2532.02px;top:637.48px;font-size:20.11px;color:#333840;font-family:'Liberation Sans',sans-serif;font-weight:400;-webkit-text-stroke:0.3px #333840;">140</div>
<div class="r" style="left:2547.80px;top:662.00px;width:2.00px;height:12.00px;background:#333840;"></div>
<div class="r" style="left:1863.50px;top:754.00px;width:735.20px;height:8.00px;background:#5e3ea3;border-radius:4px;"></div>
<div class="r" style="left:1878.00px;top:850.00px;width:501.00px;height:8.00px;background:#5e3ea3;border-radius:4px;"></div>
<div class="r" style="left:1981.00px;top:946.00px;width:398.00px;height:8.00px;background:#5e3ea3;border-radius:4px;"></div>
<div class="r" style="left:2298.00px;top:1042.00px;width:75.40px;height:8.00px;background:#3a8ad8;border-radius:4px;"></div>
<svg class="r" style="left:0;top:0" width="1000" height="1100"><path d="M734 672 V698 L757 718 V794 L781 814 V890 L805 910 V986 L829 1006 V1046" stroke="#dcdcdc" stroke-width="3.2" fill="none"/><circle cx="757" cy="758" r="6.2" stroke="#5e3ea3" stroke-width="4" fill="#fff"/><circle cx="781" cy="854" r="6.2" stroke="#5e3ea3" stroke-width="4" fill="#fff"/><circle cx="805" cy="950" r="6.2" stroke="#5e3ea3" stroke-width="4" fill="#fff"/><circle cx="829" cy="1046" r="6.2" stroke="#3a8ad8" stroke-width="4" fill="#fff"/></svg>
<div class="t" style="left:828.60px;top:720.33px;font-size:28.63px;color:#2b2b2b;font-family:'Liberation Sans',sans-serif;font-weight:400;transform:scaleX(0.9473);-webkit-text-stroke:0.3px #2b2b2b;">/gateway/hello</div>
<div class="t" style="left:828.60px;top:761.92px;font-size:22.35px;color:#c3c3c3;font-family:'Liberation Sans',sans-serif;font-weight:400;transform:scaleX(1.0471);-webkit-text-stroke:0.3px #c3c3c3;">Http – spring–webflux</div>
<div class="t" style="left:851.00px;top:815.63px;font-size:28.63px;color:#2b2b2b;font-family:'Liberation Sans',sans-serif;font-weight:400;transform:scaleX(0.9142);-webkit-text-stroke:0.3px #2b2b2b;">SpringCloudGateway/RoutingFilter</div>
<div class="t" style="left:851.00px;top:857.42px;font-size:22.35px;color:#c3c3c3;font-family:'Liberation Sans',sans-serif;font-weight:400;transform:scaleX(1.0333);-webkit-text-stroke:0.3px #c3c3c3;">Unknown – spring–cloud–gateway</div>
<div class="t" style="left:875.50px;top:911.43px;font-size:28.63px;color:#2b2b2b;font-family:'Liberation Sans',sans-serif;font-weight:400;transform:scaleX(0.9033);-webkit-text-stroke:0.3px #2b2b2b;">SpringCloudGateway/sendRequest</div>
<div class="t" style="left:875.50px;top:953.42px;font-size:22.35px;color:#c3c3c3;font-family:'Liberation Sans',sans-serif;font-weight:400;transform:scaleX(1.0444);-webkit-text-stroke:0.3px #c3c3c3;">Http – spring–cloud–gateway</div>
<div class="t" style="left:899.00px;top:1007.63px;font-size:28.63px;color:#2b2b2b;font-family:'Liberation Sans',sans-serif;font-weight:400;transform:scaleX(0.9274);-webkit-text-stroke:0.3px #2b2b2b;">GET:/hello</div>
<div class="t" style="left:899.00px;top:1050.02px;font-size:22.35px;color:#c3c3c3;font-family:'Liberation Sans',sans-serif;font-weight:400;transform:scaleX(1.0384);-webkit-text-stroke:0.3px #c3c3c3;">Http – SpringMVC</div>
<div class="r" style="left:2.00px;top:1688.00px;width:2680.00px;height:2.00px;background:#e8e8e8;"></div>
<div class="t" style="left:1725.00px;top:1702.69px;font-size:29.20px;color:#3d4452;font-family:'Liberation Mono',monospace;font-weight:400;transform:scaleX(0.7420);-webkit-text-stroke:0.3px #3d4452;">2022-04-19 13:57 ~ 2022-04-19 14:12</div>
<div class="t" style="left:2295.00px;top:1701.92px;font-size:27.23px;color:#3d4452;font-family:'Liberation Sans',sans-serif;font-weight:400;transform:scaleX(0.8405);-webkit-text-stroke:0.3px #3d4452;">En</div>
<div class="t" style="left:2353.00px;top:1701.92px;font-size:27.23px;color:#3d4452;font-family:'Liberation Sans',sans-serif;font-weight:400;transform:scaleX(0.9245);-webkit-text-stroke:0.3px #3d4452;">Server Zone UTC +0</div>
</div>
<div class="r" style="left:0;top:0;width:2px;height:1748px;background:linear-gradient(#7e2a82,#55228a 45%,#2a1870)"></div>
</body></html>
